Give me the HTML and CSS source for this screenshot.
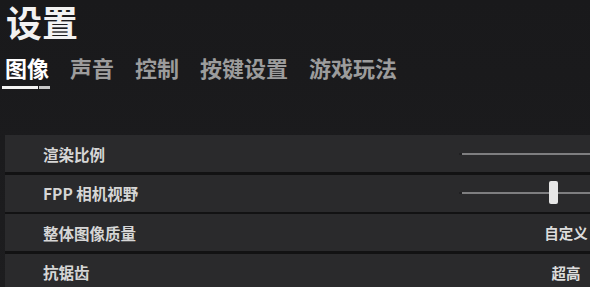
FILE: index.html
```html
<!DOCTYPE html>
<html lang="zh-CN">
<head>
<meta charset="utf-8">
<title>设置</title>
<link rel="stylesheet" href="styles.css">
</head>
<body>
<div class="page">
  <h1 class="title">设置</h1>
  <nav class="tabs">
    <span class="tab active">图像</span>
    <span class="tab">声音</span>
    <span class="tab">控制</span>
    <span class="tab">按键设置</span>
    <span class="tab">游戏玩法</span>
  </nav>
  <div class="rows">
    <div class="row">
      <span class="label">渲染比例</span>
      <div class="slider"><div class="track"></div></div>
    </div>
    <div class="row">
      <span class="label">FPP 相机视野</span>
      <div class="slider"><div class="track"><div class="thumb"></div></div></div>
    </div>
    <div class="row">
      <span class="label">整体图像质量</span>
      <span class="value">自定义</span>
    </div>
    <div class="row">
      <span class="label">抗锯齿</span>
      <span class="value">超高</span>
    </div>
  </div>
</div>
</body>
</html>
```
FILE: styles.css
```css
html, body {
  margin: 0;
  padding: 0;
  background: #1b1b1d;
  overflow: hidden;
}
.page {
  width: 590px;
  height: 287px;
  font-family: "Noto Sans CJK SC", "Noto Sans", sans-serif;
  font-weight: 700;
  color: #e4e4e4;
  background: linear-gradient(#19191b, #1d1d1f);
  display: flex;
  flex-direction: column;
}
.title {
  margin: 0;
  padding: 0 0 0 6px;
  font-size: 36px;
  line-height: 42px;
  font-weight: 700;
  color: #f2f2f2;
}
.tabs {
  display: flex;
  gap: 21px;
  margin-top: 14px;
  padding-left: 5px;
  font-size: 22px;
  line-height: 22px;
}
.tab {
  color: #9c9c9c;
}
.tab.active {
  color: #ffffff;
}
.tab.active::after {
  content: "";
  display: block;
  height: 3px;
  margin: 8px -1px 0 -3px;
  background: linear-gradient(90deg, #f4f4f4 0, #f4f4f4 75%, #1b1b1d 75%, #1b1b1d 78%, #c8c8c8 78%);
}
.rows {
  margin-top: 46px;
  margin-left: 5px;
  display: flex;
  flex-direction: column;
  gap: 2.5px;
  background: #121213;
}
.row {
  height: 37px;
  display: flex;
  align-items: center;
  background: #2a2a2c;
  padding-left: 38px;
}
.label {
  font-size: 15.5px;
  color: #d6d6d6;
  flex: 1;
}
.slider {
  width: 128px;
  height: 24px;
  display: flex;
  align-items: center;
}
.track {
  position: relative;
  width: 100%;
  height: 2px;
  background: #7e7e80;
  box-shadow: -3px 0 0 #202022;
}
.thumb {
  position: absolute;
  left: 87px;
  top: -11px;
  width: 9px;
  height: 23px;
  border-radius: 2px;
  background: #e6e6e6;
}
.value {
  width: 48px;
  text-align: center;
  font-size: 14.5px;
  color: #dcdcdc;
}
```
